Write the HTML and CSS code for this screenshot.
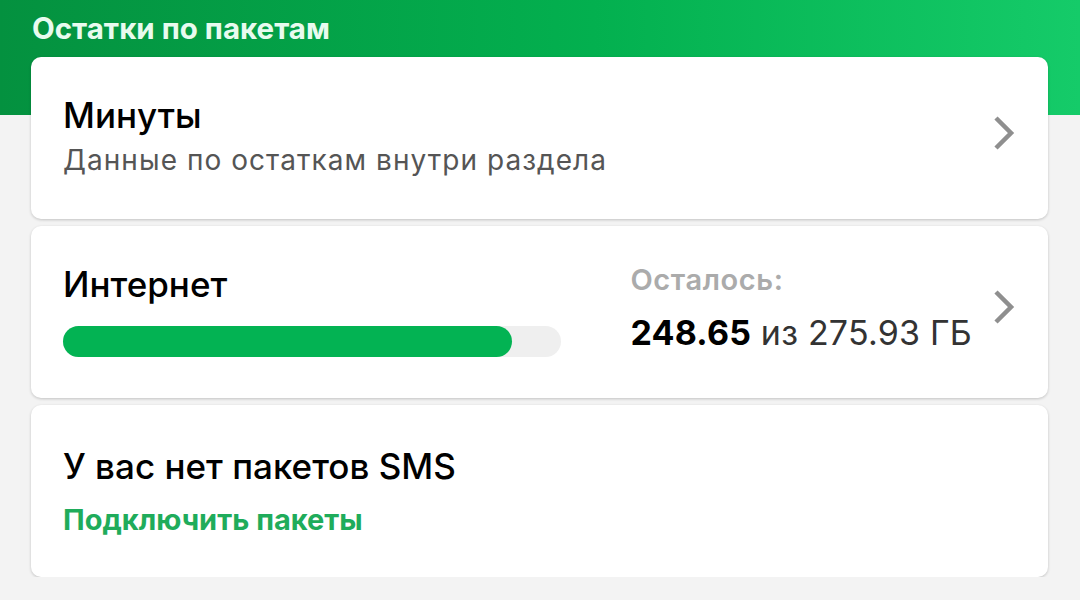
FILE: index.html
```html
<!DOCTYPE html>
<html>
  <head>
    <title>Остатки по пакетам</title>
    <link rel="stylesheet" href="styles.css">
  </head>
  <body>
    <div class="header">
      <h1 class="header-title">Остатки по пакетам</h1>
    </div>

    <div class="cards">
      <div class="card">
        <div class="card-main">
          <div class="card-title">Минуты</div>
          <div class="card-sub">Данные по остаткам внутри раздела</div>
        </div>
        <svg class="chevron" viewBox="0 0 24 36" width="24" height="36">
          <path d="M4 3 L19 18 L4 33" fill="none" stroke="#8f8f8f" stroke-width="4.5"/>
        </svg>
      </div>

      <div class="card card-internet">
        <div class="card-main">
          <div class="card-title">Интернет</div>
          <div class="progress">
            <div class="progress-fill" style="width: 90.1%"></div>
          </div>
        </div>
        <div class="remain">
          <div class="remain-label">Осталось:</div>
          <div class="remain-value"><b>248.65</b> из 275.93 ГБ</div>
        </div>
        <svg class="chevron" viewBox="0 0 24 36" width="24" height="36">
          <path d="M4 3 L19 18 L4 33" fill="none" stroke="#8f8f8f" stroke-width="4.5"/>
        </svg>
      </div>

      <div class="card card-sms">
        <div class="card-main">
          <div class="card-title">У вас нет пакетов SMS</div>
          <a class="card-link">Подключить пакеты</a>
        </div>
      </div>
    </div>
  </body>
</html>
```

FILE: styles.css
```css
body {
  margin: 0;
  background-color: #f3f3f3;
  font-family: Inter, Roboto, "Noto Sans", sans-serif;
  color: #000;
}
.header {
  height: 115px;
  background: linear-gradient(90deg, #04913f 0%, #03b04f 55%, #15cb69 100%);
  padding: 11px 32px 0;
  box-sizing: border-box;
}
.header-title {
  margin: 0;
  font-size: 29.5px;
  font-weight: 700;
  color: #e8fbef;
  line-height: 34px;
}
.cards {
  margin: -58px 32px 0 31px;
  display: flex;
  flex-direction: column;
  gap: 7px;
}
.card {
  background-color: #fff;
  border-radius: 10px;
  box-shadow: 0 1px 3px rgba(0, 0, 0, 0.2);
  display: flex;
  align-items: center;
  padding: 0 32px;
  height: 162px;
  box-sizing: border-box;
}
.card-internet,
.card-sms {
  height: 172px;
}
.card-main {
  flex: 1;
}
.card-title {
  font-size: 35px;
  font-weight: 500;
  line-height: 40px;
}
.card-internet .card-title {
  margin-top: -4px;
}
.card-sub {
  margin-top: 8px;
  font-size: 28px;
  color: #555;
  letter-spacing: 1.05px;
}
.card:first-child .card-main {
  margin-top: -4px;
}
.chevron {
  margin-left: 20px;
  margin-bottom: 10px;
  flex-shrink: 0;
}
.progress {
  margin-top: 22px;
  width: 498px;
  height: 31px;
  border-radius: 16px;
  background-color: #efefef;
}
.progress-fill {
  height: 100%;
  border-radius: 16px;
  background-color: #03b353;
}
.remain {
  margin-top: -10px;
}
.remain-label {
  font-size: 29px;
  font-weight: 600;
  color: #ababab;
  letter-spacing: 0.6px;
}
.remain-value {
  margin-top: 15px;
  font-size: 34px;
  color: #333;
  letter-spacing: 0.2px;
}
.remain-value b {
  color: #000;
  font-weight: 700;
}
.card-link {
  display: block;
  margin-top: 16px;
  font-size: 29px;
  font-weight: 700;
  color: #1fac5b;
}
```
